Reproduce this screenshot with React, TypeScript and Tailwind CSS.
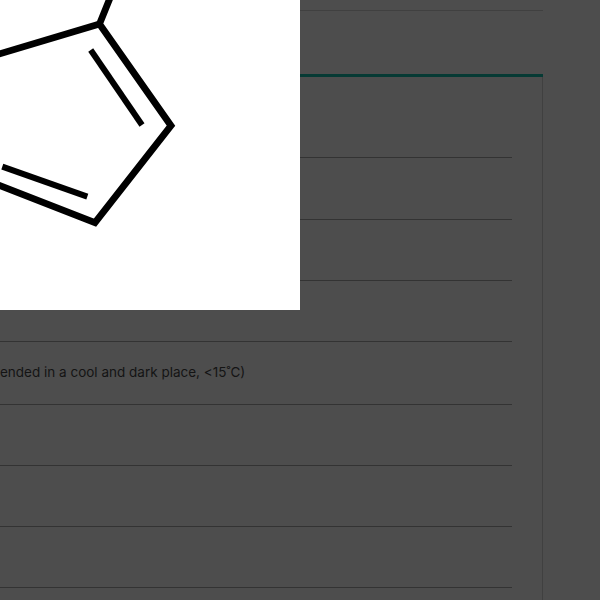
import React from "react";

const rows = [
    { h: "h-[81px]", text: "" },
    { h: "h-[62px]", text: "" },
    { h: "h-[61px]", text: "" },
    { h: "h-[61px]", text: "" },
    { h: "h-[63px]", text: "ended in a cool and dark place, <15˚C)" },
    { h: "h-[61px]", text: "" },
    { h: "h-[61px]", text: "" },
    { h: "h-[61px]", text: "" },
];

const Structure = () => (
    <svg width="300" height="310" viewBox="0 0 300 310" fill="none" stroke="#000">
        <path d="M110 -2 L99.5 24 L171 125.7 L95 222.7 L-4 184" strokeWidth="6.8" strokeLinejoin="miter" />
        <path d="M99.5 24 L-4 55" strokeWidth="6.8" />
        <path d="M90.7 50 L142 125" strokeWidth="6" />
        <path d="M2.3 166.7 L87.3 196.7" strokeWidth="6" />
    </svg>
);

const App = () => {
    return (
        <div className="relative h-[600px] w-[600px] overflow-hidden bg-[#4d4d4d] font-['Inter',sans-serif]">
            <div className="absolute left-0 top-0 z-10 h-[310px] w-[300px] bg-white">
                <Structure />
            </div>
            <div className="h-[600px] w-[543px] pt-[10px]">
                <div className="h-[67px] border-t border-[#404040] border-b-[3px] border-b-[#063a34]" />
                <div className="h-[523px] border-r border-[#404040] pr-[30px]">
                    {rows.map((row, i) => (
                        <div
                            key={i}
                            className={`flex items-center border-b border-[#333333] pb-[2px] text-[13.5px] text-[#141414] ${row.h}`}
                        >
                            <span className="whitespace-nowrap">{row.text}</span>
                        </div>
                    ))}
                </div>
            </div>
        </div>
    );
};

export default App;
